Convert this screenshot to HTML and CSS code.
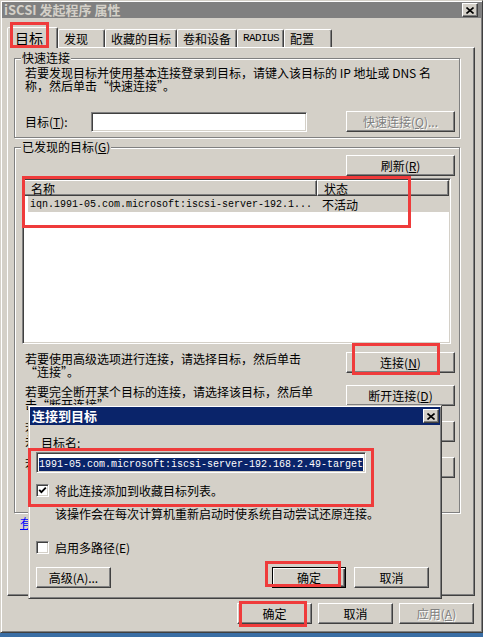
FILE: index.html
```html
<!DOCTYPE html>
<html lang="zh-CN">
  <head>
    <meta charset="UTF-8" />
    <title>iSCSI 发起程序 属性</title>
    <link rel="stylesheet" href="styles.css">
  </head>
  <body>
    <div class="window">
      <div class="titlebar inactive">
        <span class="title">iSCSI 发起程序 属性</span>
        <button class="close">
          <svg width="8" height="7" viewBox="0 0 8 7"><path d="M0.5 0.5 L7.5 6.5 M7.5 0.5 L0.5 6.5" stroke="#000" stroke-width="1.6" fill="none"/></svg>
        </button>
      </div>

      <div class="content">
        <div class="tabs">
          <div class="tab active">目标</div>
          <div class="tab w47">发现</div>
          <div class="tab w72">收藏的目标</div>
          <div class="tab w60">卷和设备</div>
          <div class="tab w47 latin">RADIUS</div>
          <div class="tab w48">配置</div>
        </div>

        <div class="panel">
          <fieldset class="group quick">
            <legend>快速连接</legend>
            <p class="hint">若要发现目标并使用基本连接登录到目标，请键入该目标的 IP 地址或 DNS 名<br>称，然后单击“快速连接”。</p>
            <div class="quick-row">
              <label class="quick-label">目标(<u>T</u>):</label>
              <input type="text" class="field quick-field" />
              <button class="btn wide push" disabled>快速连接(<u>Q</u>)...</button>
            </div>
          </fieldset>

          <fieldset class="group found">
            <legend>已发现的目标(<u>G</u>)</legend>
            <div class="refresh-row">
              <button class="btn wide">刷新(<u>R</u>)</button>
            </div>
            <div class="list">
              <div class="list-head">
                <span class="head-cell col-name">名称</span>
                <span class="head-cell col-state">状态</span>
              </div>
              <div class="list-row">
                <span class="row-name mono">iqn.1991-05.com.microsoft:iscsi-server-192.1...</span>
                <span class="row-state">不活动</span>
              </div>
            </div>

            <div class="action first">
              <p class="action-text">若要使用高级选项进行连接，请选择目标，然后单击“连接”。</p>
              <button class="btn wide">连接(<u>N</u>)</button>
            </div>
            <div class="action">
              <p class="action-text">若要完全断开某个目标的连接，请选择该目标，然后单击“断开连接”。</p>
              <button class="btn wide">断开连接(<u>D</u>)</button>
            </div>
            <div class="action spaced">
              <p class="action-text">若要查看目标的属性（包括会话配置），请选择该目标并单击“属性”。</p>
              <button class="btn wide">属性(<u>P</u>)...</button>
            </div>
            <div class="action spaced">
              <p class="action-text">若要配置与目标关联的设备，请选择该目标，然后单击“设备”。</p>
              <button class="btn wide">设备(<u>V</u>)...</button>
            </div>
          </fieldset>

          <a class="help-link" href="#">有关基本连接和目标的详细信息</a>
        </div>

        <div class="footer">
          <button class="btn">确定</button>
          <button class="btn">取消</button>
          <button class="btn" disabled>应用(<u>A</u>)</button>
        </div>
      </div>

      <div class="dialog">
        <div class="titlebar">
          <span class="title">连接到目标</span>
          <button class="close">
            <svg width="8" height="7" viewBox="0 0 8 7"><path d="M0.5 0.5 L7.5 6.5 M7.5 0.5 L0.5 6.5" stroke="#000" stroke-width="1.6" fill="none"/></svg>
          </button>
        </div>
        <div class="dialog-body">
          <div class="target-label">目标名:</div>
          <div class="field target-field"><span class="selected mono">1991-05.com.microsoft:iscsi-server-192.168.2.49-target</span></div>

          <div class="check-row first">
            <span class="checkbox">
              <svg width="9" height="9" viewBox="0 0 9 9"><path d="M1.2 3.8 L3.4 6.2 L7.8 1.6" stroke="#000" stroke-width="1.8" fill="none"/></svg>
            </span>
            <span>将此连接添加到收藏目标列表。</span>
          </div>
          <p class="check-note">该操作会在每次计算机重新启动时使系统自动尝试还原连接。</p>

          <div class="check-row second">
            <span class="checkbox"></span>
            <span>启用多路径(E)</span>
          </div>

          <div class="dialog-buttons">
            <button class="btn">高级(A)...</button>
            <button class="btn default push">确定</button>
            <button class="btn">取消</button>
          </div>
        </div>
      </div>

      <div class="mark mark-tab"></div>
      <div class="mark mark-list"></div>
      <div class="mark mark-connect"></div>
      <div class="mark mark-target"></div>
      <div class="mark mark-dialog-ok"></div>
      <div class="mark mark-ok"></div>
    </div>
  </body>
</html>
```

FILE: styles.css
```css
* {
  box-sizing: border-box;
}

body {
  margin: 0;
  background: #3a6ea5;
  font-family: "Noto Sans CJK SC", "Noto Sans", sans-serif;
  font-size: 12px;
  line-height: 13px;
  color: #000;
}

p {
  margin: 0;
}

.mono {
  font-family: "Liberation Mono", "DejaVu Sans Mono", monospace;
  font-size: 10px;
}

/* window frame */

.window {
  position: relative;
  width: 483px;
  height: 633px;
  padding: 1px;
  background: #d4d0c8;
  border: 1px solid;
  border-color: #d4d0c8 #404040 #404040 #d4d0c8;
  box-shadow: inset 1px 1px #fff, inset -1px -1px #808080;
}

.titlebar {
  display: flex;
  align-items: center;
  height: 16px;
  padding: 0 3px 0 2px;
  background: #0a246a;
  color: #fff;
}

.titlebar.inactive {
  background: #808080;
  color: #d4d0c8;
}

.title {
  font-size: 13px;
  font-weight: bold;
  line-height: 14px;
}

.close {
  display: flex;
  align-items: center;
  justify-content: center;
  width: 16px;
  height: 14px;
  margin-left: auto;
  padding: 0;
  background: #d4d0c8;
  border: 1px solid;
  border-color: #fff #404040 #404040 #fff;
  box-shadow: inset -1px -1px #808080;
}

.content {
  padding: 0 6px 0 5px;
}

/* tabs */

.tabs {
  display: flex;
  align-items: flex-end;
  height: 20px;
  margin-top: 9px;
}

.tab {
  height: 18px;
  padding: 2px 0 0 5px;
  border: 1px solid;
  border-bottom: none;
  border-color: #fff #404040 transparent #fff;
  border-radius: 2px 2px 0 0;
  box-shadow: inset -1px 0 #808080;
  line-height: 13px;
  white-space: nowrap;
}

.tab.latin {
  padding-left: 5px;
  font-family: "Liberation Mono", "DejaVu Sans Mono", monospace;
  font-size: 11px;
  letter-spacing: -0.6px;
}

.tab.active {
  position: relative;
  z-index: 1;
  width: 51px;
  height: 21px;
  margin-bottom: -1px;
  padding: 3px 0 0 7px;
  font-size: 14px;
  line-height: 15px;
  background: #d4d0c8;
}

.w47 { width: 47px; }
.w48 { width: 48px; }
.w60 { width: 60px; }
.w72 { width: 72px; }

.panel {
  height: 549px;
  padding: 4px 0 0 6px;
  border: 1px solid;
  border-color: #fff #404040 #404040 #fff;
  box-shadow: inset -1px -1px #808080;
}

/* group boxes */

.group {
  width: 446px;
  margin: 0;
  padding: 2px 4px 5px 10px;
  border: 1px solid #808080;
  box-shadow: 1px 1px #fff, inset 1px 1px #fff;
  min-inline-size: 0;
}

.group legend {
  margin-left: -4px;
  padding: 0 1px;
  line-height: 12px;
  background: #d4d0c8;
}

.found {
  margin-top: 3px;
  padding-bottom: 29px;
}

.quick-row {
  display: flex;
  align-items: center;
  margin-top: 19px;
}

.quick-label {
  width: 66px;
}

.quick-field {
  width: 216px;
  height: 20px;
}

.push {
  margin-left: auto;
}

.refresh-row {
  display: flex;
  justify-content: flex-end;
}

/* list view */

.list {
  width: 429px;
  height: 166px;
  margin: 2px 0 0 -3px;
  background: #fff;
  border: 1px solid;
  border-color: #808080 #fff #fff #808080;
  box-shadow: inset 1px 1px #404040, inset -1px -1px #d4d0c8;
  padding: 1px;
}

.list-head {
  display: flex;
  height: 16px;
}

.head-cell {
  height: 16px;
  padding: 1px 0 0 6px;
  background: #d4d0c8;
  border: 1px solid;
  border-color: #fff #404040 #404040 #fff;
  box-shadow: inset -1px -1px #808080;
}

.col-name {
  width: 293px;
}

.col-state {
  flex: 1;
}

.list-row {
  display: flex;
  align-items: center;
  height: 16px;
  margin-left: 4px;
  background: #d4d0c8;
}

.row-name {
  width: 289px;
  padding-left: 2px;
  white-space: nowrap;
}

.row-state {
  padding-left: 5px;
}

/* connect / disconnect rows */

.action {
  display: flex;
  align-items: flex-start;
  margin-top: 7px;
}

.action.first {
  margin-top: 8px;
}

.action.spaced {
  margin-top: 10px;
}

.action-text {
  width: 290px;
  min-height: 26px;
}

.action .btn {
  margin-left: auto;
}

.help-link {
  display: block;
  margin: 3px 0 0 6px;
  color: #0000ff;
  text-decoration: underline;
}

/* buttons and fields */

.btn {
  width: 75px;
  height: 21px;
  padding: 0;
  font: inherit;
  line-height: 13px;
  color: #000;
  background: #d4d0c8;
  border: 1px solid;
  border-color: #fff #404040 #404040 #fff;
  box-shadow: inset -1px -1px #808080;
}

.btn.wide {
  width: 109px;
}

.btn:disabled {
  color: #808080;
  text-shadow: 1px 1px #fff;
}

.btn.default {
  width: 74px;
  border-color: #000;
  box-shadow: inset 1px 1px #fff, inset -1px -1px #404040, inset -2px -2px #808080;
}

.field {
  padding: 0;
  background: #fff;
  border: 1px solid;
  border-color: #808080 #fff #fff #808080;
  box-shadow: inset 1px 1px #404040, inset -1px -1px #d4d0c8;
}

.footer {
  display: flex;
  justify-content: flex-end;
  gap: 6px;
  margin-top: 7px;
  padding-right: 1px;
}

/* connect dialog, shown over the property sheet */

.dialog {
  position: absolute;
  left: 27px;
  top: 404px;
  width: 414px;
  height: 194px;
  padding: 1px;
  background: #d4d0c8;
  border: 1px solid;
  border-color: #d4d0c8 #404040 #404040 #d4d0c8;
  box-shadow: inset 1px 1px #fff, inset -1px -1px #808080;
}

.dialog .titlebar {
  height: 18px;
  padding-right: 1px;
}

.dialog-body {
  padding: 11px 11px 0 6px;
}

.target-label {
  margin-left: 5px;
}

.target-field {
  width: 330px;
  height: 21px;
  margin-top: 3px;
  padding: 2px 0 0 2px;
  overflow: hidden;
  white-space: nowrap;
}

.selected {
  display: inline-block;
  line-height: 13px;
  background: #0a246a;
  color: #fff;
}

.check-row {
  display: flex;
  align-items: center;
  gap: 6px;
  height: 13px;
}

.check-row.first {
  margin-top: 11px;
}

.check-row.second {
  margin-top: 21px;
}

.checkbox {
  display: flex;
  align-items: center;
  justify-content: center;
  width: 13px;
  height: 13px;
  background: #fff;
  border: 1px solid;
  border-color: #808080 #fff #fff #808080;
  box-shadow: inset 1px 1px #404040, inset -1px -1px #d4d0c8;
}

.check-note {
  margin-top: 10px;
  padding-left: 19px;
}

.dialog-buttons {
  display: flex;
  gap: 8px;
  margin-top: 13px;
}

/* red annotation boxes */

.mark {
  position: absolute;
  z-index: 5;
  border: 3px solid #ef3b3b;
}

.mark-tab { left: 9px; top: 21px; width: 39px; height: 26px; }
.mark-list { left: 21px; top: 175px; width: 389px; height: 52px; }
.mark-connect { left: 351px; top: 342px; width: 88px; height: 32px; }
.mark-target { left: 27px; top: 447px; width: 346px; height: 59px; }
.mark-dialog-ok { left: 264px; top: 560px; width: 76px; height: 26px; }
.mark-ok { left: 238px; top: 600px; width: 68px; height: 26px; }
```
